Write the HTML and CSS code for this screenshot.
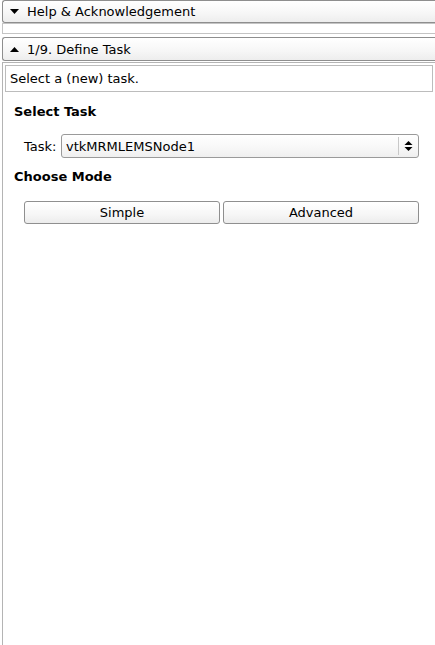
FILE: index.html
```html
<!DOCTYPE html>
<html>
<head>
<meta charset="utf-8">
<link rel="stylesheet" href="styles.css">
</head>
<body>
<div class="panel">
  <div class="hdr hdr-first">
    <svg class="tri" width="9" height="5" viewBox="0 0 9 5"><path d="M0 0H9L4.5 5Z" fill="#000"/></svg>
    <span>Help &amp; Acknowledgement</span>
  </div>
  <div class="collapsed"></div>
  <div class="hdr hdr-second">
    <svg class="tri" width="9" height="5" viewBox="0 0 9 5"><path d="M0 5H9L4.5 0Z" fill="#000"/></svg>
    <span>1/9. Define Task</span>
  </div>
  <div class="content">
    <div class="desc">Select a (new) task.</div>
    <div class="section-title">Select Task</div>
    <div class="task-row">
      <span class="lbl">Task:</span>
      <div class="combo">
        <span class="combo-text">vtkMRMLEMSNode1</span>
        <div class="combo-btn">
          <svg width="9" height="12" viewBox="0 0 9 12"><path d="M0.5 5H8.5L4.5 1Z M0.5 7H8.5L4.5 11Z" fill="#000"/></svg>
        </div>
      </div>
    </div>
    <div class="section-title mode">Choose Mode</div>
    <div class="btn-row">
      <div class="btn">Simple</div>
      <div class="btn">Advanced</div>
    </div>
  </div>
</div>
</body>
</html>
```
FILE: styles.css
```css
html, body {
  margin: 0;
  padding: 0;
  background: #ffffff;
}
body {
  font-family: "DejaVu Sans", sans-serif;
  font-size: 12px;
  color: #000;
  width: 435px;
  height: 645px;
  overflow: hidden;
}
.panel {
  display: flex;
  flex-direction: column;
  height: 645px;
}
.hdr {
  margin-left: 2px;
  height: 21px;
  border: 1px solid #8e8e8e;
  border-right: none;
  border-radius: 3px 0 0 3px;
  background: linear-gradient(#ffffff, #f6f6f6 60%, #ededed);
  display: flex;
  align-items: center;
  box-sizing: content-box;
  flex: none;
}
.hdr span {
  font-size: 13px;
  margin-left: 8px;
  line-height: 15px;
}
.tri {
  margin-left: 7px;
}
.collapsed {
  margin: 0 0 0 2px;
  height: 9px;
  border: 1px solid #c4c4c4;
  border-right: none;
  flex: none;
}
.hdr-second {
  margin-top: 3px;
  height: 22px;
}
.content {
  flex: 1;
  margin: 1px 0 0 2px;
  border-left: 1px solid #b4b4b4;
  border-top: 1px solid #b4b4b4;
  padding: 2px 2px 0 2px;
}
.desc {
  height: 25px;
  border: 1px solid #bcbcbc;
  display: flex;
  align-items: center;
  padding-left: 4px;
  font-size: 13px;
}
.section-title {
  font-weight: bold;
  font-size: 13px;
  line-height: 16px;
  margin: 12px 0 0 9px;
  height: 16px;
}
.task-row {
  display: flex;
  align-items: center;
  margin: 14px 0 0 19px;
}
.lbl {
  font-size: 13px;
  width: 37px;
}
.combo {
  width: 356px;
  height: 22px;
  border: 1px solid #9a9a9a;
  border-radius: 3px;
  background: linear-gradient(#ffffff, #f7f7f7 60%, #efefef);
  display: flex;
  align-items: center;
}
.combo-text {
  flex: 1;
  font-size: 13px;
  padding-left: 4px;
}
.combo-btn {
  width: 19px;
  height: 18px;
  border-left: 1px solid #c8c8c8;
  display: flex;
  align-items: center;
  justify-content: center;
}
.mode {
  margin-top: 11px;
}
.btn-row {
  display: flex;
  gap: 3px;
  margin: 16px 0 0 19px;
  width: 395px;
}
.btn {
  flex: 1;
  height: 21px;
  border: 1px solid #8f8f8f;
  border-radius: 3px;
  background: linear-gradient(#ffffff, #f6f6f6 60%, #ececec);
  display: flex;
  align-items: center;
  justify-content: center;
  font-size: 13px;
}
```
